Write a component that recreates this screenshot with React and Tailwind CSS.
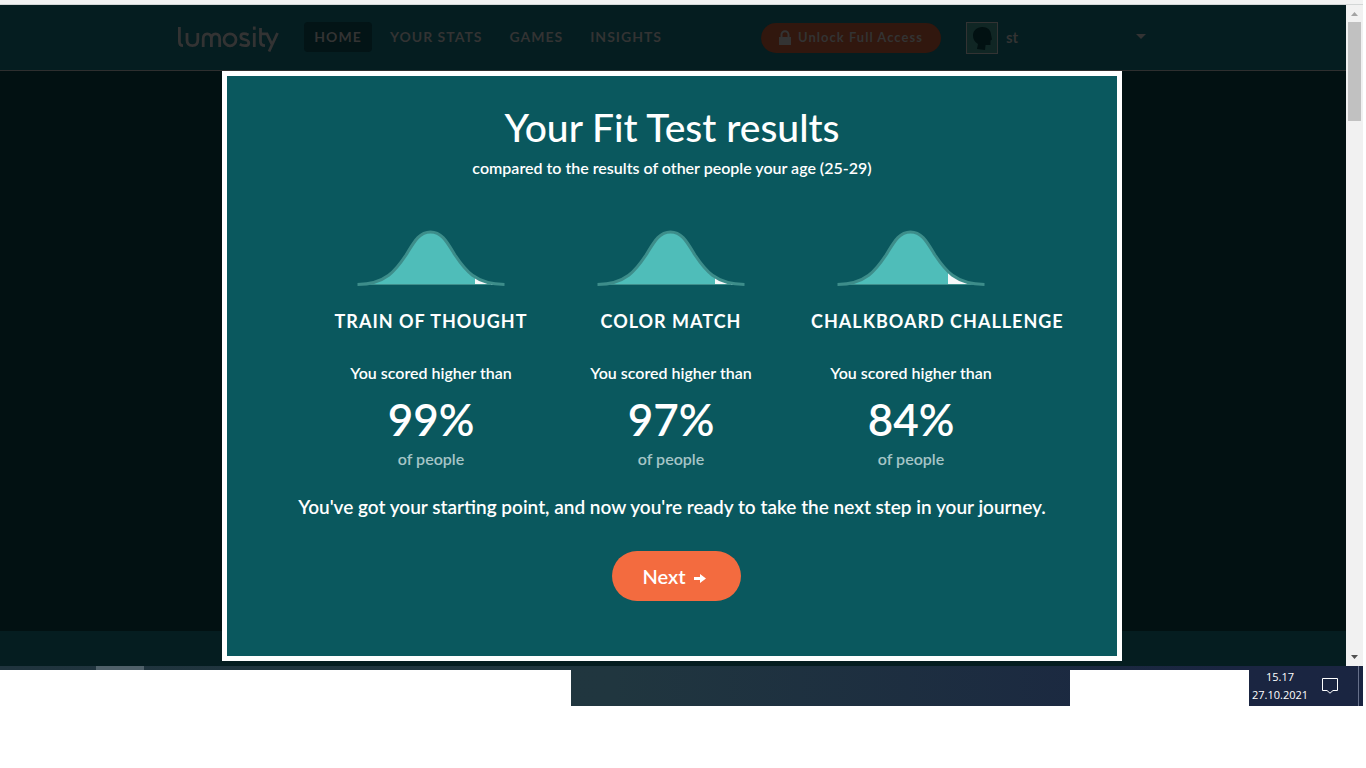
const CURVE =
  "M0.5 54.5 C29 54 39 40 49 25 C57 12 62 2 73.5 2 C85 2 90 12 98 25 C108 40 118 54 147.5 54.5";

const results = [
  { game: "Train of Thought", percent: 99, split: 118 },
  { game: "Color Match", percent: 97, split: 118 },
  { game: "Chalkboard Challenge", percent: 84, split: 111 },
];

const navItems = ["Your Stats", "Games", "Insights"];

function BellCurve({ id, split }) {
  return (
    <svg className="h-14 w-[148px]" viewBox="0 0 148 56" aria-hidden="true">
      <clipPath id={id}>
        <rect x={split} y="0" width="22" height="56" />
      </clipPath>
      <path d={CURVE} fill="#4fbdb9" />
      <path d={CURVE} fill="#f6f8f9" clipPath={`url(#${id})`} />
      <path d="M14 54.5H134" stroke="#3f8f8c" strokeWidth="1" />
      <path d={CURVE} fill="none" stroke="#3d8d8a" strokeWidth="3" />
    </svg>
  );
}

function Header() {
  return (
    <header className="flex h-[66px] items-start border-b border-[#2e2f2f] bg-[#051d20] pt-4 pl-[177px] text-[#333333]">
      <a href="#home" className="mt-1 w-[103px]" aria-label="lumosity">
        <svg
          className="h-7 w-[103px]"
          viewBox="0 0 103 28"
          fill="none"
          stroke="#333"
          strokeWidth="2.8"
          aria-hidden="true"
        >
          <path d="M2.4 2V16.500Q2.400 20.600 6 20.600" />
          <path d="M10 8V15Q10 20.600 15.500 20.600Q20.800 20.600 20.800 15V8" />
          <path d="M26.200 22V14Q26.200 8.900 30.300 8.900Q34.400 8.900 34.400 14V22M34.400 14Q34.400 8.900 38.600 8.900Q42.700 8.900 42.700 14V22" />
          <circle cx="53" cy="14.800" r="6" />
          <path d="M71.500 10Q69 8.700 67 8.700Q63.800 8.700 63.800 11.400Q63.800 13.800 67.400 14.500Q71.800 15.300 71.800 17.900Q71.800 20.700 67.600 20.700Q64.800 20.700 62.800 19.200" />
          <path d="M77.300 8V22M77.300 1.500V4.700" />
          <path d="M83.500 3V16.500Q83.500 20.600 88 20.600M83.500 8.900H90L95 19.500M100.500 8L92 26.500" />
        </svg>
      </a>
      <nav className="ml-6 flex items-center text-sm font-bold tracking-[1px] uppercase">
        <a href="#home" className="flex h-[30px] w-[68px] mt-px items-center justify-center rounded bg-[#031416]">
          Home
        </a>
        <div className="ml-[18px] flex gap-[27px]">
          {navItems.map((item) => (
            <a key={item} href="#nav">{item}</a>
          ))}
        </div>
      </nav>
      <div className="ml-auto flex w-[585px] items-start">
        <button className="mt-0.5 flex h-[30px] w-[180px] items-center justify-center gap-[7px] rounded-full bg-[#31170e] text-[13px] font-bold tracking-[1px]">
          <svg className="h-4 w-3" viewBox="0 0 12 16" aria-hidden="true">
            <rect y="7" width="12" height="8" fill="#333" />
            <path d="M2.500 8V4.700A3.500 3.500 0 0 1 9.500 4.700V8" fill="none" stroke="#333" strokeWidth="2" />
          </svg>
          Unlock Full Access
        </button>
        <button className="mt-px ml-[25px] flex w-[180px] items-center">
          <svg className="size-8" viewBox="0 0 32 32" aria-hidden="true">
            <rect x="0.500" y="0.500" width="31" height="31" fill="#102624" stroke="#333" />
            <path
              d="M16 5C21 4.800 25 8 25 12.500L26 17.500L24.500 18.500L24.500 23H19.500L19 28L11 27L12 22C8.500 20 7 17 7 13.500C7 8.500 11 5.200 16 5Z"
              fill="#021112"
            />
          </svg>
          <span className="mb-0.5 ml-2 text-[15px] font-bold">st</span>
          <svg className="mb-1 ml-auto h-[5px] w-[10px]" viewBox="0 0 10 5" aria-hidden="true">
            <path d="M0 0H10L5 5Z" fill="#333" />
          </svg>
        </button>
      </div>
    </header>
  );
}

function ResultsDialog() {
  return (
    <div
      role="dialog"
      aria-labelledby="results-title"
      className="col-start-1 row-start-1 mr-0.5 mb-[5px] h-[590px] w-[900px] justify-self-center border-[5px] border-white bg-[#0a585e] pt-[27px] text-center font-semibold text-white"
    >
      <h1 id="results-title" className="text-[39px] leading-[48px] font-medium">
        Your Fit Test results
      </h1>
      <p className="mt-[5px] text-base leading-6">
        compared to the results of other people your age (25-29)
      </p>
      <div className="mt-[50px] flex gap-10 pl-[104px]">
        {results.map(({ game, percent, split }) => (
          <section key={game} className="flex w-[200px] flex-col">
            <div className="flex justify-center">
              <BellCurve id={`tail-${percent}`} split={split} />
            </div>
            <h2 className="mt-5 text-lg leading-[30px] font-bold tracking-[1px] whitespace-nowrap uppercase">
              {game}
            </h2>
            <p className="mt-[25px] text-base leading-6">You scored higher than</p>
            <p className="mt-2 text-[44px] leading-[52px]">{percent}%</p>
            <p className="mt-0.5 text-base leading-6 text-[#a6c5c7]">of people</p>
          </section>
        ))}
      </div>
      <p className="mt-[22px] text-[19px] leading-7">
        You've got your starting point, and now you're ready to take the next step in your journey.
      </p>
      <button className="mt-[30px] ml-2 inline-flex h-[50px] w-[129px] items-center justify-center gap-2 rounded-full bg-[#f36b3f] pr-1 text-xl">
        Next
        <svg className="mt-1 h-[9px] w-3" viewBox="0 0 12 9" aria-hidden="true">
          <path d="M0 3H6V0L12 4.500L6 9V6H0Z" fill="#fff" />
        </svg>
      </button>
    </div>
  );
}

function Scrollbar() {
  return (
    <div className="flex w-[17px] flex-col items-center bg-[#f1f1f1]" aria-hidden="true">
      <svg className="mt-[7px] h-1 w-[7px]" viewBox="0 0 7 4">
        <path d="M0 4L3.500 0L7 4Z" fill="#a3a3a3" />
      </svg>
      <div className="mt-1.5 h-[99px] w-[13px] bg-[#c1c1c1]" />
      <svg className="mt-auto mb-[7px] h-1 w-[7px]" viewBox="0 0 7 4">
        <path d="M0 0H7L3.500 4Z" fill="#505050" />
      </svg>
    </div>
  );
}

function Taskbar() {
  return (
    <footer className="flex h-10 bg-linear-to-r from-[#20343e] via-[#20363f] via-45% to-[#1a2541] to-90% text-white">
      <div className="flex w-[571px] flex-col">
        <div className="ml-24 h-1 w-12 bg-[#50616a]" />
        <div className="flex-1 bg-white" />
      </div>
      <div className="w-[499px]" />
      <div className="mt-1 flex-1 bg-white" />
      <div className="flex w-[114px] items-center">
        <div className="w-[62px] text-center font-['Open_Sans',sans-serif] text-[11px] leading-[18px]">
          <div>15.17</div>
          <div>27.10.2021</div>
        </div>
        <svg className="ml-[11px] h-4 w-4" viewBox="0 0 16 16" fill="none" stroke="#fff" aria-hidden="true">
          <path d="M0.500 0.500H15.500V12.500H11L8 15.200L5 12.500H0.500Z" />
        </svg>
        <div className="ml-auto h-full w-[5px] border-l border-[#66708a]" />
      </div>
    </footer>
  );
}

export default function App() {
  return (
    <div className="min-h-screen bg-white pr-[3px] font-['Lato',sans-serif]">
      <div className="h-[5px] border-b border-[#d3d6d6] bg-[#f2f2f2]" />
      <div className="flex">
        <main className="flex-1">
          <Header />
          <div className="grid">
            <div className="col-start-1 row-start-1 flex flex-col">
              <div className="flex-1 bg-[#021112]" />
              <div className="h-[35px] bg-[#051d20]" />
            </div>
            <ResultsDialog />
          </div>
        </main>
        <Scrollbar />
      </div>
      <Taskbar />
    </div>
  );
}
